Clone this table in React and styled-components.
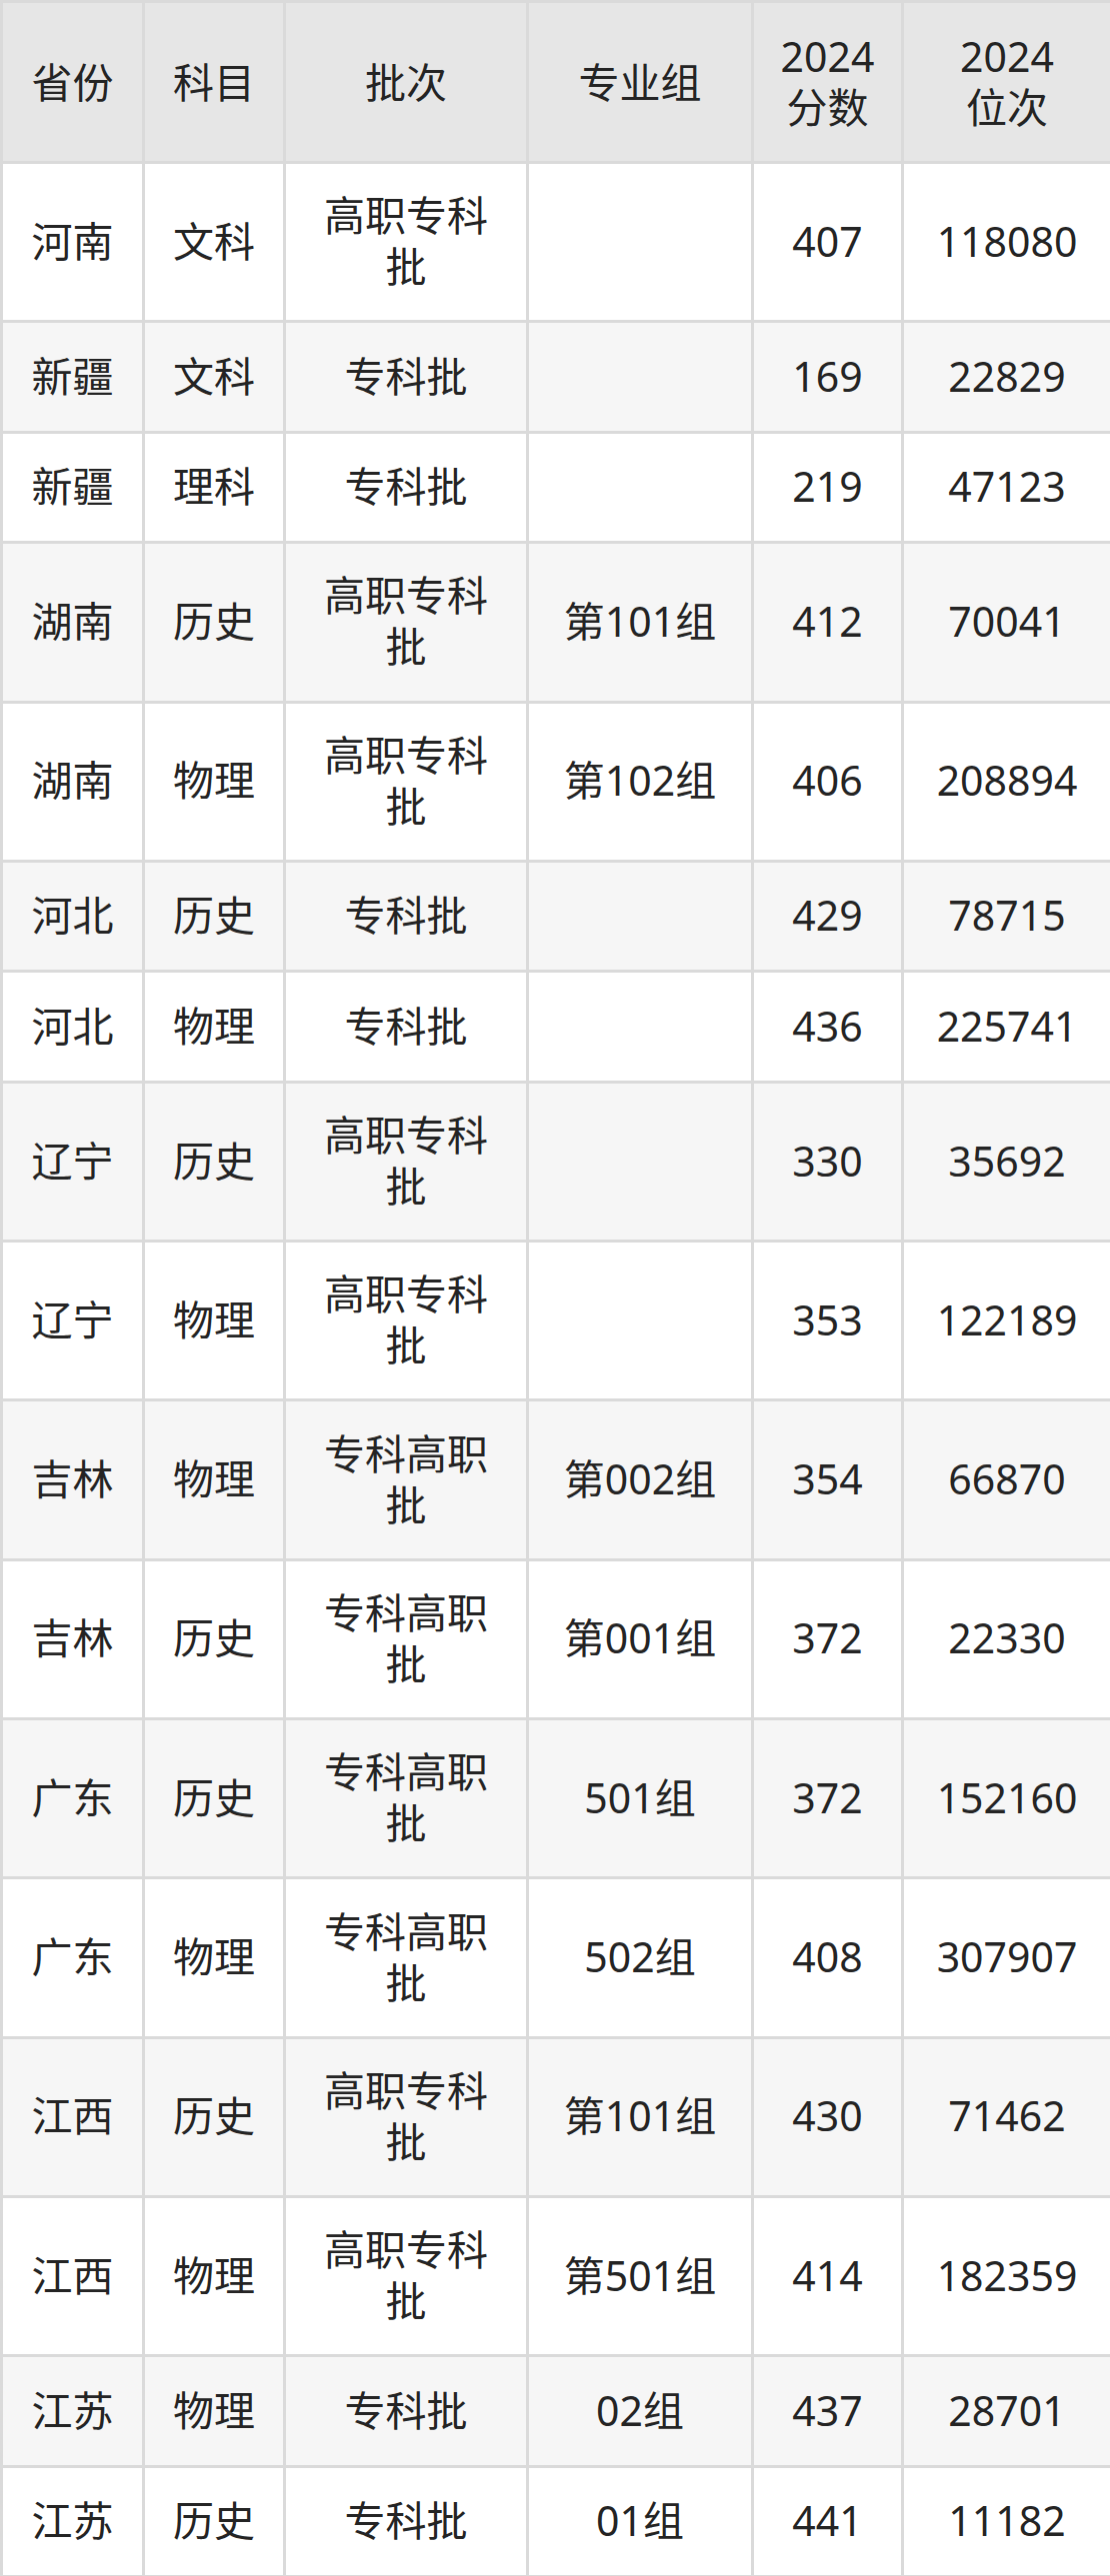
import React from 'react';
import styled, { createGlobalStyle } from 'styled-components';

const GlobalStyle = createGlobalStyle`
  html, body {
    margin: 0;
    padding: 0;
    background: #ffffff;
  }
  body {
    font-family: "Noto Sans", "Noto Sans CJK SC", sans-serif;
    color: #242424;
  }
`;

const Table = styled.table`
  width: 1110px;
  border-collapse: collapse;
  table-layout: fixed;
  font-size: 41px;
  line-height: 51px;
`;

const HeadRow = styled.tr`
  height: 161px;
  background: #e6e6e6;
`;

const Row = styled.tr`
  height: ${p => (p.$tall ? '159.3px' : '110.5px')};
  background: ${p => (p.$alt ? '#f6f6f6' : '#ffffff')};
`;

const Th = styled.th`
  border: 3px solid #dadada;
  font-weight: 400;
  text-align: center;
  vertical-align: middle;
  padding: 0 20px;
`;

const Td = styled.td`
  border: 3px solid #dadada;
  text-align: center;
  vertical-align: middle;
  padding: 0 24px 2px;
`;

const widths = [142, 141, 243, 225, 150, 209];

const rows = [
  ['河南', '文科', '高职专科批', '', '407', '118080'],
  ['新疆', '文科', '专科批', '', '169', '22829'],
  ['新疆', '理科', '专科批', '', '219', '47123'],
  ['湖南', '历史', '高职专科批', '第101组', '412', '70041'],
  ['湖南', '物理', '高职专科批', '第102组', '406', '208894'],
  ['河北', '历史', '专科批', '', '429', '78715'],
  ['河北', '物理', '专科批', '', '436', '225741'],
  ['辽宁', '历史', '高职专科批', '', '330', '35692'],
  ['辽宁', '物理', '高职专科批', '', '353', '122189'],
  ['吉林', '物理', '专科高职批', '第002组', '354', '66870'],
  ['吉林', '历史', '专科高职批', '第001组', '372', '22330'],
  ['广东', '历史', '专科高职批', '501组', '372', '152160'],
  ['广东', '物理', '专科高职批', '502组', '408', '307907'],
  ['江西', '历史', '高职专科批', '第101组', '430', '71462'],
  ['江西', '物理', '高职专科批', '第501组', '414', '182359'],
  ['江苏', '物理', '专科批', '02组', '437', '28701'],
  ['江苏', '历史', '专科批', '01组', '441', '11182'],
];

export default function App() {
  return (
    <>
      <GlobalStyle />
      <Table>
        <colgroup>
          {widths.map((w, i) => (
            <col key={i} style={{ width: w }} />
          ))}
        </colgroup>
        <thead>
          <HeadRow>
            <Th>省份</Th>
            <Th>科目</Th>
            <Th>批次</Th>
            <Th>专业组</Th>
            <Th>2024<br />分数</Th>
            <Th>2024<br />位次</Th>
          </HeadRow>
        </thead>
        <tbody>
          {rows.map((r, i) => (
            <Row key={i} $alt={i % 2 === 1} $tall={r[2].length > 3}>
              {r.map((c, j) => (
                <Td key={j}>{c}</Td>
              ))}
            </Row>
          ))}
        </tbody>
      </Table>
    </>
  );
}
